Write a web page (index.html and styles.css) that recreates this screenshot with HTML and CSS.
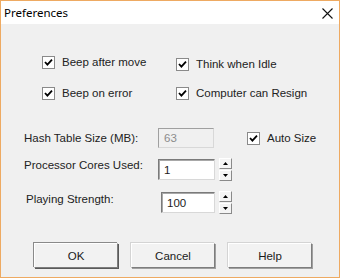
FILE: index.html
```html
<!DOCTYPE html>
<html lang="en">
<head>
    <meta charset="UTF-8">
    <title>Preferences</title>
    <link rel="stylesheet" href="styles.css">
</head>
<body>

    <div class="window">
        <div class="titlebar">
            <span class="title">Preferences</span>
            <svg class="close" width="11" height="11" viewBox="0 0 11 11">
                <path d="M0.5 0.5 L10.5 10.5 M10.5 0.5 L0.5 10.5" stroke="#111" stroke-width="1.1" fill="none"/>
            </svg>
        </div>

        <div class="content">
            <div class="options">
                <label class="check"><span class="box"><svg width="9" height="9" viewBox="0 0 9 9"><path d="M1 4 L3.4 6.6 L8 1.6" stroke="#000" stroke-width="1.8" fill="none"/></svg></span>Beep after move</label>
                <label class="check lower"><span class="box"><svg width="9" height="9" viewBox="0 0 9 9"><path d="M1 4 L3.4 6.6 L8 1.6" stroke="#000" stroke-width="1.8" fill="none"/></svg></span>Think when Idle</label>
                <label class="check"><span class="box"><svg width="9" height="9" viewBox="0 0 9 9"><path d="M1 4 L3.4 6.6 L8 1.6" stroke="#000" stroke-width="1.8" fill="none"/></svg></span>Beep on error</label>
                <label class="check"><span class="box"><svg width="9" height="9" viewBox="0 0 9 9"><path d="M1 4 L3.4 6.6 L8 1.6" stroke="#000" stroke-width="1.8" fill="none"/></svg></span>Computer can Resign</label>
            </div>

            <div class="fields">
                <div class="row row-hash">
                    <span class="label">Hash Table Size (MB):</span>
                    <div class="input disabled">63</div>
                    <label class="check auto"><span class="box"><svg width="9" height="9" viewBox="0 0 9 9"><path d="M1 4 L3.4 6.6 L8 1.6" stroke="#000" stroke-width="1.8" fill="none"/></svg></span>Auto Size</label>
                </div>
                <div class="row row-cores">
                    <span class="label">Processor Cores Used:</span>
                    <div class="input">1</div>
                    <div class="spin">
                        <span class="spin-btn"><svg width="5" height="3" viewBox="0 0 5 3"><path d="M2.5 0 L5 3 L0 3 Z" fill="#000"/></svg></span>
                        <span class="spin-btn"><svg width="5" height="3" viewBox="0 0 5 3"><path d="M0 0 L5 0 L2.5 3 Z" fill="#000"/></svg></span>
                    </div>
                </div>
                <div class="row row-strength">
                    <span class="label">Playing Strength:</span>
                    <div class="input">100</div>
                    <div class="spin">
                        <span class="spin-btn"><svg width="5" height="3" viewBox="0 0 5 3"><path d="M2.5 0 L5 3 L0 3 Z" fill="#000"/></svg></span>
                        <span class="spin-btn"><svg width="5" height="3" viewBox="0 0 5 3"><path d="M0 0 L5 0 L2.5 3 Z" fill="#000"/></svg></span>
                    </div>
                </div>
            </div>

            <div class="buttons">
                <button class="btn btn-default">OK</button>
                <button class="btn">Cancel</button>
                <button class="btn">Help</button>
            </div>
        </div>
    </div>

</body>
</html>
```

FILE: styles.css
```css
body {
    margin: 0;
    padding: 0;
    background: #ffffff;
    font-family: "Liberation Sans", Arial, sans-serif;
    font-size: 11.5px;
    color: #222222;
}

.window {
    width: 340px;
    height: 278px;
    box-sizing: border-box;
    border: 1px solid #eeaa62;
    display: flex;
    flex-direction: column;
}

.titlebar {
    height: 23px;
    background: #ffffff;
    display: flex;
    align-items: center;
    justify-content: space-between;
    padding: 0 6px 0 3px;
}

.title {
    font-family: "Noto Sans", sans-serif;
    font-size: 11.5px;
    color: #000;
}

.close {
    display: block;
    margin-top: 1px;
}

.content {
    flex: 1;
    background: #f0f0f0;
}

/* checkboxes */

.options {
    display: grid;
    grid-template-columns: 134px auto;
    row-gap: 15px;
    margin: 31px 0 0 41px;
}

.check {
    display: flex;
    align-items: center;
    height: 14px;
    line-height: 14px;
}

.check.lower {
    margin-top: 2px;
}

.box {
    width: 11px;
    height: 11px;
    border: 1px solid #8a8a8a;
    background: #ffffff;
    margin-right: 7px;
    display: flex;
    align-items: center;
    justify-content: center;
}

/* number fields */

.fields {
    display: flex;
    flex-direction: column;
    gap: 10px;
    margin: 28px 0 0 23px;
}

.row {
    display: flex;
    align-items: flex-start;
}

.label {
    width: 134px;
    line-height: 14px;
}

.row-hash .label {
    line-height: 20px;
}

.input {
    width: 57px;
    height: 21px;
    box-sizing: border-box;
    border: 1px solid;
    border-color: #7a7a7a #d8d8d8 #d8d8d8 #7a7a7a;
    box-shadow: inset 1px 1px 0 #a8a8a8;
    background: #ffffff;
    padding: 3px 0 0 5px;
    line-height: 14px;
    margin-top: 1px;
}

.row-hash .input {
    width: 56px;
    height: 20px;
    margin-top: 0;
    padding-top: 2px;
}

.input.disabled {
    background: #f0f0f0;
    color: #8c8c8c;
    border-color: #a0a0a0 #d8d8d8 #d8d8d8 #a0a0a0;
    box-shadow: none;
}

.check.auto {
    margin: 3px 0 0 33px;
}

.row-strength {
    padding-left: 2px;
}

.row-strength .label {
    width: 135px;
    margin-top: 1px;
}

.row-strength .input {
    width: 54px;
}

.spin {
    display: flex;
    flex-direction: column;
    gap: 1px;
    margin-left: 4px;
}

.spin-btn {
    width: 13px;
    height: 11px;
    box-sizing: border-box;
    border: 1px solid;
    border-color: #ffffff #8a8a8a #8a8a8a #ffffff;
    background: #f4f4f4;
    display: flex;
    align-items: center;
    justify-content: center;
}

/* dialog buttons */

.buttons {
    display: flex;
    gap: 13px;
    margin: 29px 0 0 33px;
}

.btn {
    width: 84px;
    height: 25px;
    font-family: "Liberation Sans", Arial, sans-serif;
    font-size: 11.5px;
    color: #1a1a1a;
    background: #f2f2f2;
    border: 1px solid;
    border-color: #ffffff #7d7d7d #7d7d7d #ffffff;
    box-shadow: 1px 1px 0 #a0a0a0, -1px -1px 0 #d4d4d4;
    padding: 0;
}

.btn-default {
    box-shadow: 1px 1px 0 #5a5a5a, -1px -1px 0 #8a8a8a;
}
```
